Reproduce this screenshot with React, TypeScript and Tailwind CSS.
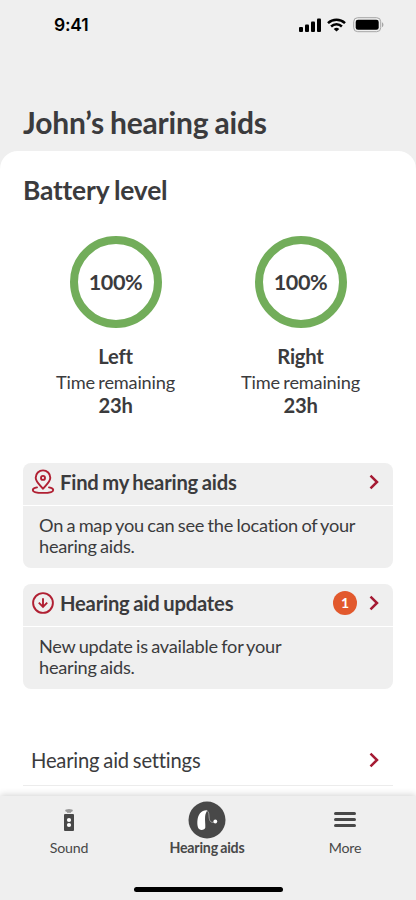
import type { ReactNode } from "react";

type CardProps = {
  icon: ReactNode;
  title: string;
  badge?: string;
  children: ReactNode;
};

function Chevron() {
  return (
    <svg width="10" height="16" viewBox="0 0 10 16" fill="none">
      <path d="M1.500 1.600 8 8 1.500 14.400" stroke="#a51a33" strokeWidth="2.500" />
    </svg>
  );
}

function PinIcon() {
  return (
    <svg
      width="24"
      height="26"
      viewBox="0 0 24 26"
      fill="none"
      stroke="#b01f32"
      strokeWidth="1.900"
      strokeLinejoin="round"
    >
      <path d="M12 19.800C9.500 16.400 4.700 12.800 4.700 8.700a7.300 7.300 0 0 1 14.600 0C19.300 12.800 14.500 16.400 12 19.800Z" />
      <circle cx="12" cy="8.900" r="2" />
      <path
        d="M6 18.400C3.200 18.800 1.800 19.700 1.800 20.900c0 2 4.600 3 10.200 3s10.200-1 10.200-3c0-1.200-1.400-2.100-4.200-2.500"
        strokeLinecap="round"
      />
    </svg>
  );
}

function UpdateIcon() {
  return (
    <svg
      width="24"
      height="24"
      viewBox="0 0 24 24"
      fill="none"
      stroke="#b01f32"
      strokeWidth="1.900"
    >
      <circle cx="12" cy="12" r="9.900" />
      <path d="M12 7.200v8.600M7.800 11.700 12 15.900 16.200 11.700" />
    </svg>
  );
}

function StatusBar() {
  return (
    <div className="flex h-[50px] items-center justify-between pr-[32px] pl-[54px] text-black">
      <span className="mt-px font-[Inter,sans-serif] text-[17.5px] font-semibold">
        9:41
      </span>
      <div className="flex items-center">
        <svg width="22" height="14" viewBox="0 0 22 14">
          <rect x="0" y="9" width="4" height="5" rx="1" />
          <rect x="6" y="6.500" width="4" height="7.500" rx="1" />
          <rect x="12" y="3.500" width="4" height="10.500" rx="1" />
          <rect x="18" y="0.500" width="4" height="13.500" rx="1" />
        </svg>
        <svg
          className="ml-[6px]"
          width="19"
          height="14"
          viewBox="0 0 19 14"
          fill="none"
          stroke="black"
          strokeWidth="2.500"
        >
          <path d="M1 5.200a12.300 12.300 0 0 1 17 0" />
          <path d="M4.100 8.500a7.800 7.800 0 0 1 10.800 0" />
          <path d="M9.500 13.400 6.700 10.900a4.200 4.200 0 0 1 5.600 0Z" fill="black" stroke="none" />
        </svg>
        <svg className="ml-[7px]" width="31" height="16" viewBox="0 0 31 16">
          <rect x="0.700" y="0.700" width="27" height="14" rx="4" fill="none" stroke="#a5a5a5" />
          <rect x="2.700" y="2.700" width="23" height="10" rx="2.300" />
          <path d="M29 5.200v5c1.900-.8 1.900-4.200 0-5Z" fill="#a5a5a5" />
        </svg>
      </div>
    </div>
  );
}

function Battery({ side }: { side: string }) {
  return (
    <div className="flex w-[185px] flex-col items-center">
      <div className="flex size-[92px] items-center justify-center rounded-full border-8 border-[#72ad5a] text-[21.6px] font-bold tracking-[-0.4px]">
        100%
      </div>
      <p className="mt-[15px] text-[20.2px] leading-[26px] font-bold">{side}</p>
      <p className="text-[18.2px] leading-[27px]">Time remaining</p>
      <p className="text-[20.2px] leading-[18px] font-bold">23h</p>
    </div>
  );
}

function Card({ icon, title, badge, children }: CardProps) {
  return (
    <section className="h-[105px] rounded-lg bg-[#efefef]">
      <div className="flex h-[43px] items-center border-b border-white pr-[14px] pb-[5px] pl-2">
        <span className="flex w-6 justify-center">{icon}</span>
        <h3 className="mt-px ml-[5px] text-[20.2px] leading-[24px] font-bold">{title}</h3>
        <div className="ml-auto flex items-center gap-[12px]">
          {badge && (
            <span className="flex size-[24px] items-center justify-center rounded-full bg-[#e2592d] text-[14px] font-bold text-white">
              {badge}
            </span>
          )}
          <Chevron />
        </div>
      </div>
      <p className="px-4 pt-[9px] text-[18.2px] leading-[20.8px] tracking-[-0.25px]">
        {children}
      </p>
    </section>
  );
}

function SoundIcon() {
  return (
    <svg width="12" height="24" viewBox="0 0 12 24" fill="#484848">
      <ellipse cx="6" cy="2.500" rx="3.800" ry="1.500" fill="#999" />
      <path d="M4 4.500h4" stroke="#aaa" strokeWidth="1" />
      <rect x="1" y="6" width="10" height="17" rx="1" />
      <circle cx="6" cy="12" r="2.100" fill="#fff" />
      <circle cx="6" cy="17" r="2.100" fill="#fff" />
    </svg>
  );
}

function HearingAidIcon() {
  return (
    <svg width="38" height="38" viewBox="0 0 38 38">
      <circle cx="19" cy="19" r="18.500" fill="#484848" />
      <path
        d="M10 26.500C8.700 22 9.300 15.500 12 12.200c2-2.300 4.800-3.300 7.300-2.900-1 2-2 3.700-2.200 6.500-.3 3.300.4 7.700.2 10.700-.2 2.600-6.100 3.800-7.300 0Z"
        fill="#fff"
      />
      <path
        d="M18.800 9.500c2.300 1 2 4 2.300 6.500.3 3.500 1.200 6.500 5.800 5"
        fill="none"
        stroke="#aaa"
        strokeWidth=".8"
      />
      <circle cx="27.300" cy="20.500" r="1.900" fill="#fff" />
    </svg>
  );
}

function TabBar() {
  return (
    <nav className="relative h-[104px] bg-[#efefef] pt-[5px] text-[14.2px] text-[#484848] shadow-[0_-1px_7px_rgba(0,0,0,0.18)]">
      <div className="grid grid-cols-3 pr-[2px]">
        <div className="flex flex-col items-center">
          <div className="flex h-[38px] items-center">
            <SoundIcon />
          </div>
          <span className="leading-[18px]">Sound</span>
        </div>
        <div className="flex flex-col items-center font-bold">
          <HearingAidIcon />
          <span className="leading-[18px]">Hearing aids</span>
        </div>
        <div className="flex flex-col items-center">
          <div className="flex h-[38px] flex-col justify-center gap-[3px] pb-px">
            <span className="h-[3px] w-[22px] rounded-full bg-[#484848]" />
            <span className="h-[3px] w-[22px] rounded-full bg-[#484848]" />
            <span className="h-[3px] w-[22px] rounded-full bg-[#484848]" />
          </div>
          <span className="leading-[18px]">More</span>
        </div>
      </div>
      <div className="mx-auto mt-[30px] h-[5px] w-[149px] rounded-full bg-black" />
    </nav>
  );
}

export default function App() {
  return (
    <div className="flex h-[900px] w-[416px] flex-col overflow-hidden bg-[#efefef] font-[Lato,sans-serif] tracking-[-0.2px] text-[#3b3b3d] [font-variant-ligatures:none] [word-spacing:-1px]">
      <StatusBar />
      <h1 className="mt-[54px] mb-[11px] pl-[23px] text-[30px] leading-[36px] font-bold">
        John’s hearing aids
      </h1>
      <main className="h-[645px] rounded-t-[18px] bg-white px-[23px]">
        <h2 className="pt-[23px] text-[26.4px] leading-[32px] font-bold">
          Battery level
        </h2>
        <div className="mt-[30px] flex">
          <Battery side="Left" />
          <Battery side="Right" />
        </div>
        <div className="mt-[49px] flex flex-col gap-4">
          <Card icon={<PinIcon />} title="Find my hearing aids">
            On a map you can see the location of your
            <br />
            hearing aids.
          </Card>
          <Card icon={<UpdateIcon />} title="Hearing aid updates" badge="1">
            New update is available for your
            <br />
            hearing aids.
          </Card>
        </div>
        <div className="mt-[46px] flex h-[51px] items-center justify-between border-b border-[#ececec] pr-[14px] pl-2 text-[20.2px]">
          Hearing aid settings
          <Chevron />
        </div>
      </main>
      <TabBar />
    </div>
  );
}
